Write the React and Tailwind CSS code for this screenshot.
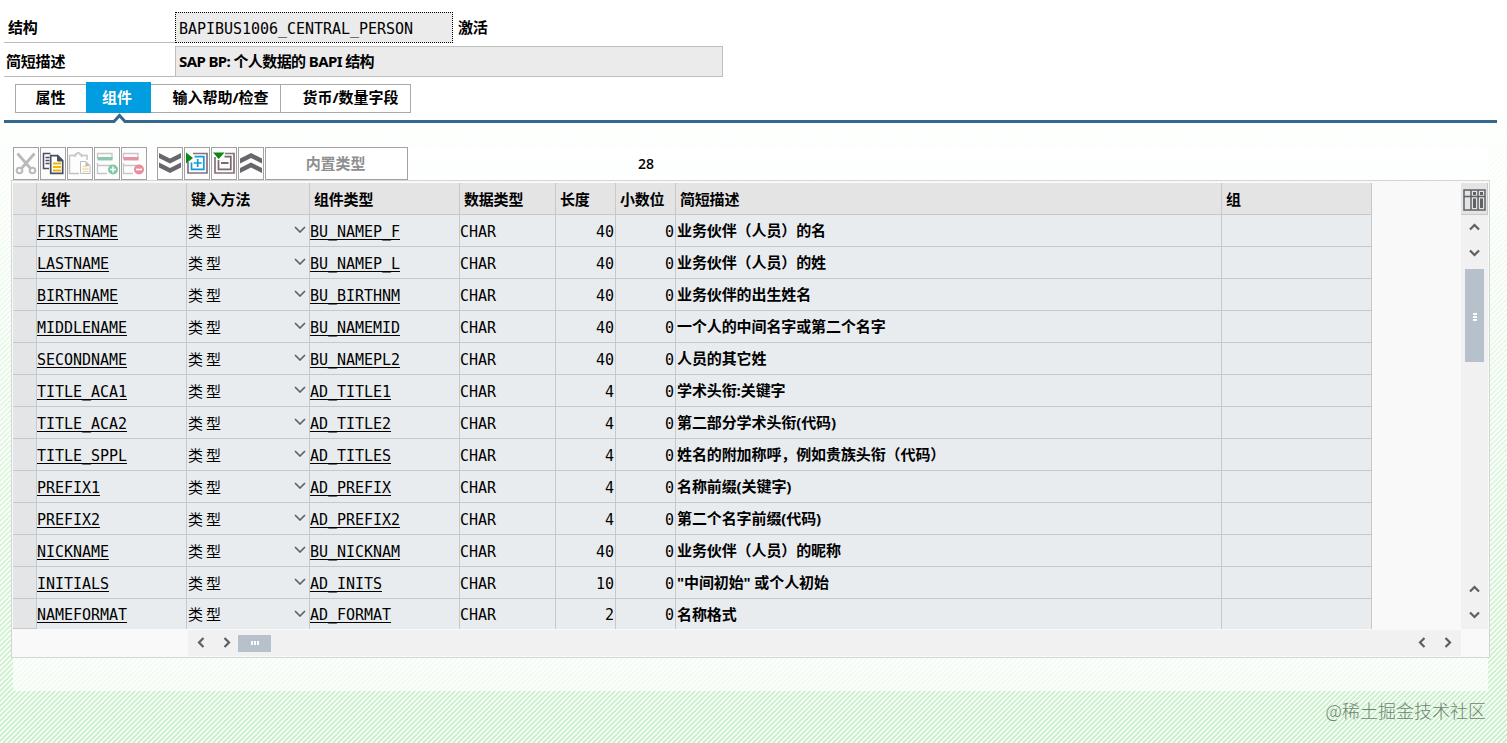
import clsx from "clsx"

const rows = [
  ["FIRSTNAME", "BU_NAMEP_F", 40, "业务伙伴（人员）的名"],
  ["LASTNAME", "BU_NAMEP_L", 40, "业务伙伴（人员）的姓"],
  ["BIRTHNAME", "BU_BIRTHNM", 40, "业务伙伴的出生姓名"],
  ["MIDDLENAME", "BU_NAMEMID", 40, "一个人的中间名字或第二个名字"],
  ["SECONDNAME", "BU_NAMEPL2", 40, "人员的其它姓"],
  ["TITLE_ACA1", "AD_TITLE1", 4, "学术头衔:关键字"],
  ["TITLE_ACA2", "AD_TITLE2", 4, "第二部分学术头衔(代码)"],
  ["TITLE_SPPL", "AD_TITLES", 4, "姓名的附加称呼，例如贵族头衔（代码）"],
  ["PREFIX1", "AD_PREFIX", 4, "名称前缀(关键字)"],
  ["PREFIX2", "AD_PREFIX2", 4, "第二个名字前缀(代码)"],
  ["NICKNAME", "BU_NICKNAM", 40, "业务伙伴（人员）的昵称"],
  ["INITIALS", "AD_INITS", 10, "\"中间初始\" 或个人初始"],
  ["NAMEFORMAT", "AD_FORMAT", 2, "名称格式"],
]

const columns = [
  { title: "组件", width: "w-[150px]" },
  { title: "键入方法", width: "w-[123px]" },
  { title: "组件类型", width: "w-[150px]" },
  { title: "数据类型", width: "w-[96px]" },
  { title: "长度", width: "w-[60px]" },
  { title: "小数位", width: "w-[60px]" },
  { title: "简短描述", width: "w-[546px]" },
  { title: "组", width: "w-[150px]" },
]

const mono = "font-['DejaVu_Sans_Mono','Noto_Sans_CJK_SC',monospace] text-[15px] font-normal tracking-[-0.03px] pt-[2px]"

function Chevron({ className, d = "M1 1l5 5 5-5", w = 12, h = 7, stroke = 1.6 }) {
  return (
    <svg width={w} height={h} className={className} fill="none" stroke="#5c5f63" strokeWidth={stroke}>
      <path d={d} />
    </svg>
  )
}

const UP = "M1 6.5l4.5-4.5 4.5 4.5"
const DOWN = "M1 1.5l4.5 4.5 4.5-4.5"
const LEFT = "M6.5 1l-4.5 4.5 4.5 4.5"
const RIGHT = "M1.5 1l4.5 4.5-4.5 4.5"

function VArrow({ d }) {
  return (
    <div className="flex h-[26px] items-center justify-center pb-[2px]">
      <Chevron d={d} w={11} h={8} stroke={2.2} />
    </div>
  )
}

function HArrow({ d }) {
  return (
    <div className="flex h-full w-[26px] items-center justify-center pb-px">
      <Chevron d={d} w={8} h={11} stroke={2.2} />
    </div>
  )
}

function ToolButton({ children, className }) {
  return (
    <button className={clsx("flex h-[33px] w-[26px] items-center justify-center border border-[#a3a3a3] bg-[#fdfdfd]", className)}>
      <svg width="24" height="31" viewBox="0 0 24 31" fill="none">
        {children}
      </svg>
    </button>
  )
}

function Toolbar() {
  return (
    <div className="flex h-[33px] gap-px">
      <ToolButton>
        {/* cut */}
        <g stroke="#b9b9b9" strokeWidth="2">
          <path d="M3.5 5.5L17 21M20.500 5.500L7 21" strokeWidth="2.700" />
          <circle cx="5.500" cy="22.500" r="2.800" />
          <circle cx="18.500" cy="22.500" r="2.800" />
        </g>
      </ToolButton>
      <ToolButton>
        {/* copy */}
        <path d="M9.500 5.500H2.500V20.500H8M4.500 9.500h4M4.500 12.500h4M4.500 15.500h4" stroke="#475064" strokeWidth="1.500" />
        <path d="M9.700 7.700h7l5 5V25.300h-12z" fill="#fff" stroke="#475064" strokeWidth="1.700" />
        <path d="M16.500 8v5h5z" fill="#475064" stroke="#475064" />
        <path d="M12 15.500h8M12 19h8M12 22.500h8" stroke="#f5b400" strokeWidth="2" />
      </ToolButton>
      <ToolButton>
        {/* paste */}
        <path d="M7 7.500H1.500V25.500H11M13 7.500h6V12M7 9V6.500h1.500c0-2.500 3.500-2.500 3.500 0h1.500V9" stroke="#c3c3c3" strokeWidth="1.500" />
        <path d="M12.500 13.500h5.500l4 4v8h-9.500z" fill="#fff" stroke="#bcbcc4" />
        <path d="M17.500 13.500v4.500h4.500z" fill="#b5b5bd" />
        <path d="M14.500 18.500h5M14.500 21h6M14.500 23.500h6" stroke="#f3dda0" strokeWidth="1.300" />
      </ToolButton>
      <ToolButton>
        {/* insert row */}
        <path d="M2.500 11V5.500h14.500V11M2.500 15v10.500H12M2.500 17.500h14" stroke="#c6c6c6" strokeWidth="1.300" />
        <path d="M2.500 10.700h15" stroke="#8cc8ae" strokeWidth="3.500" />
        <circle cx="18" cy="21.500" r="5" fill="#7fc8a5" />
        <path d="M18 18.500v6M15 21.500h6" stroke="#fff" strokeWidth="1.500" />
      </ToolButton>
      <ToolButton>
        {/* delete row */}
        <path d="M1.500 11V5.500h14.500V11M1.500 15v10.500H11M1.500 17.500h14" stroke="#c6c6c6" strokeWidth="1.300" />
        <path d="M1.500 10.700h15" stroke="#e593a0" strokeWidth="3.500" />
        <circle cx="17" cy="21.500" r="5" fill="#ea8c9c" />
        <path d="M14 21.500h6" stroke="#fff" strokeWidth="1.700" />
      </ToolButton>
      <ToolButton className="ml-[9px]">
        <g fill="#66676a">
          <path d="M1 5l11 5.500L23 5v5l-11 5.500L1 10z" />
          <path d="M1 14.500l11 5.500 11-5.500v5L12 25 1 19.500z" />
        </g>
      </ToolButton>
      <ToolButton>
        <path d="M8 5.500h14v19.500H3V14" stroke="#87707f" strokeWidth="1.700" />
        <path d="M9.500 8.700h9.300v12.600H6.500V14.500" stroke="#129bdc" strokeWidth="1.700" />
        <path d="M12.700 11v8M8.700 15h8" stroke="#129bdc" strokeWidth="1.700" />
        <path d="M1 4.500v11l7-5.500z" fill="#0b8617" />
      </ToolButton>
      <ToolButton>
        <path d="M13 5.500h9v19.500H3V9" stroke="#87707f" strokeWidth="1.700" />
        <path d="M12.500 8.700h6.300v12.600H6.500V12" stroke="#75696e" strokeWidth="1.700" />
        <path d="M9 15h7.500" stroke="#555" strokeWidth="1.700" />
        <path d="M1 4.500h11.500L6.700 11z" fill="#0b8617" />
      </ToolButton>
      <ToolButton>
        <g fill="#66676a">
          <path d="M1 10.500L12 5l11 5.500v5L12 10 1 15.500z" />
          <path d="M1 20l11-5.500L23 20v5l-11-5.500L1 25z" />
        </g>
      </ToolButton>
      <button className="h-[33px] w-[143px] border border-[#a3a3a3] bg-white/60 pr-[2px] tracking-[-0.1px] text-[#8f8f8f]">内置类型</button>
      <span className="ml-[229px] self-center font-['Open_Sans',sans-serif] text-sm font-semibold">28</span>
    </div>
  )
}

function Cell({ col, className, children }) {
  return (
    <div className={clsx("flex items-center border-r border-[#c6c9cb] whitespace-nowrap", columns[col].width, className)}>
      {children}
    </div>
  )
}

function Row({ row, last }) {
  const [name, type, length, description] = row
  return (
    <div className={clsx("flex border-[#c6c9cb] bg-[#e8ecef] leading-[28px]", last ? "h-[30px]" : "h-8 border-b")}>
      <div className={clsx("w-6 border-r border-[#c6c9cb] bg-[#e4e5e6]", last && "border-b")} />
      <Cell col={0} className={mono}>
        <span className="underline decoration-1 underline-offset-2">{name}</span>
      </Cell>
      <Cell col={1} className="justify-between pl-px pr-[3px]">
        <span className="text-[15px] font-normal tracking-[3px]">类型</span>
        <Chevron className="mb-[2px]" />
      </Cell>
      <Cell col={2} className={mono}>
        <span className="underline decoration-1 underline-offset-2">{type}</span>
      </Cell>
      <Cell col={3} className={mono}>CHAR</Cell>
      <Cell col={4} className={clsx(mono, "justify-end pr-px")}>{length}</Cell>
      <Cell col={5} className={clsx(mono, "justify-end pr-px")}>0</Cell>
      <Cell col={6} className="pl-px pb-px tracking-[-0.1px]">{description}</Cell>
      <Cell col={7} />
    </div>
  )
}

function Table() {
  return (
    <div className="-ml-[2px] flex h-[478px] w-[1479px] flex-col border border-[#d3d6d3] bg-[#f9f9f9] pl-px pt-[2px]">
      <div className="flex h-[446px]">
        <div className="w-[1448px]">
          <div className="flex h-8 w-[1359px] border-b border-[#c6c9cb] bg-[#e4e4e4]">
            <div className="w-6 border-r border-[#c6c9cb]" />
            {columns.map((c, i) => (
              <Cell key={c.title} col={i} className="pl-1 pt-[2px] tracking-[-0.2px]">{c.title}</Cell>
            ))}
          </div>
          <div className="w-[1359px]">
            {rows.map((row, i) => (
              <Row key={row[0]} row={row} last={i === rows.length - 1} />
            ))}
          </div>
        </div>
        <div className="flex w-[27px] flex-col bg-[#f1f1f1]">
          <div className="flex h-8 items-center justify-center border-r border-b border-[#c9c9c9] bg-[#e4e4e4] pt-[2px]">
            <svg width="23" height="22" fill="none" stroke="#5e6166" strokeWidth="1.500">
              <path d="M1 1h21v20H1zM1 7.500h21M8 1v20M15 1v20" />
              <path d="M11.500 3v3M18.500 3v3M11.500 9.500v9.500M18.500 9.500v9.500" strokeWidth="3" />
            </svg>
          </div>
          <VArrow d={UP} />
          <VArrow d={DOWN} />
          <div className="mx-auto mt-[2px] flex h-[93px] w-[19px] flex-col items-center justify-center gap-px bg-[#b6c1cc] pt-[2px]">
            <div className="h-[2px] w-1 bg-white" />
            <div className="h-[2px] w-1 bg-white" />
            <div className="h-[2px] w-1 bg-white" />
          </div>
          <div className="flex-1" />
          <VArrow d={UP} />
          <VArrow d={DOWN} />
        </div>
      </div>
      <div className="ml-[175px] mt-px flex h-[26px] w-[1273px] items-center bg-[#f1f1f1]">
        <HArrow d={LEFT} />
        <HArrow d={RIGHT} />
        <div className="-ml-[2px] flex h-[17px] w-[33px] items-center justify-center gap-px bg-[#b6c1cc]">
          <div className="h-1 w-[2px] bg-white" />
          <div className="h-1 w-[2px] bg-white" />
          <div className="h-1 w-[2px] bg-white" />
        </div>
        <div className="flex-1" />
        <HArrow d={LEFT} />
        <HArrow d={RIGHT} />
      </div>
    </div>
  )
}

function Header() {
  return (
    <div className="pl-1 pt-3 tracking-[-0.2px]">
      <div className="flex h-[31px]">
        <div className="flex w-[171px] items-center border-b border-[#b9bcb9] pl-1">结构</div>
        <div className={clsx("flex w-[278px] items-center border border-dotted border-black bg-[#ebebeb] pl-[3px]", mono)}>
          <span className="pt-px">BAPIBUS1006_CENTRAL_PERSON</span>
        </div>
        <span className="ml-[5px] self-center">激活</span>
      </div>
      <div className="mt-[3px] flex h-[31px]">
        <div className="flex w-[171px] items-center border-b border-[#b9bcb9] pl-[2px]">简短描述</div>
        <div className="flex w-[548px] items-center border border-[#bcc0bc] bg-[#ebebeb] pl-[3px]">
          <span className="font-['Noto_Sans','Noto_Sans_CJK_SC',sans-serif] tracking-[-0.600px]">SAP BP: 个人数据的 BAPI 结构</span>
        </div>
      </div>
    </div>
  )
}

function Tabs() {
  const tab = "mt-[2px] flex h-[29px] items-center justify-center border border-[#a9a9a9] bg-white pb-[2px]"
  return (
    <div className="mt-[5px]">
      <div className="flex h-[31px] pl-[15px]">
        <div className={clsx(tab, "w-[71px] border-r-0 pr-px")}>属性</div>
        <div className="flex h-[31px] w-[65px] items-center justify-center bg-[#009de0] pr-[3px] text-white">组件</div>
        <div className={clsx(tab, "w-[130px] border-l-0 pl-[10px]")}>输入帮助/检查</div>
        <div className={clsx(tab, "w-[130px] border-l-0 pl-[10px]")}>货币/数量字段</div>
      </div>
      <svg width="1507" height="10" className="block" fill="none">
        <path d="M4 8.500h110l5.500-6 5.500 6h1372" stroke="#35678f" strokeWidth="3" />
      </svg>
    </div>
  )
}

export default function App() {
  return (
    <div className="h-[743px] w-[1507px] overflow-hidden bg-[linear-gradient(135deg,#cdf1ce_25%,#fbfffb_25%,#fbfffb_50%,#cdf1ce_50%,#cdf1ce_75%,#fbfffb_75%)] bg-[length:5px_5px]">
      <div className="flex h-full flex-col bg-linear-to-b from-white from-12% to-transparent font-['Open_Sans','Noto_Sans_CJK_SC',sans-serif] text-[15px] font-bold text-black">
        <Header />
        <Tabs />
        <div className="ml-[13px] mt-[24px] h-[544px] w-[1475px] bg-white/70">
          <Toolbar />
          <Table />
        </div>
        <div className="mr-[21px] mt-[6px] self-end font-['Noto_Sans_CJK_SC',sans-serif] text-[18px] font-light text-[#6f836f]">
          @稀土掘金技术社区
        </div>
      </div>
    </div>
  )
}
